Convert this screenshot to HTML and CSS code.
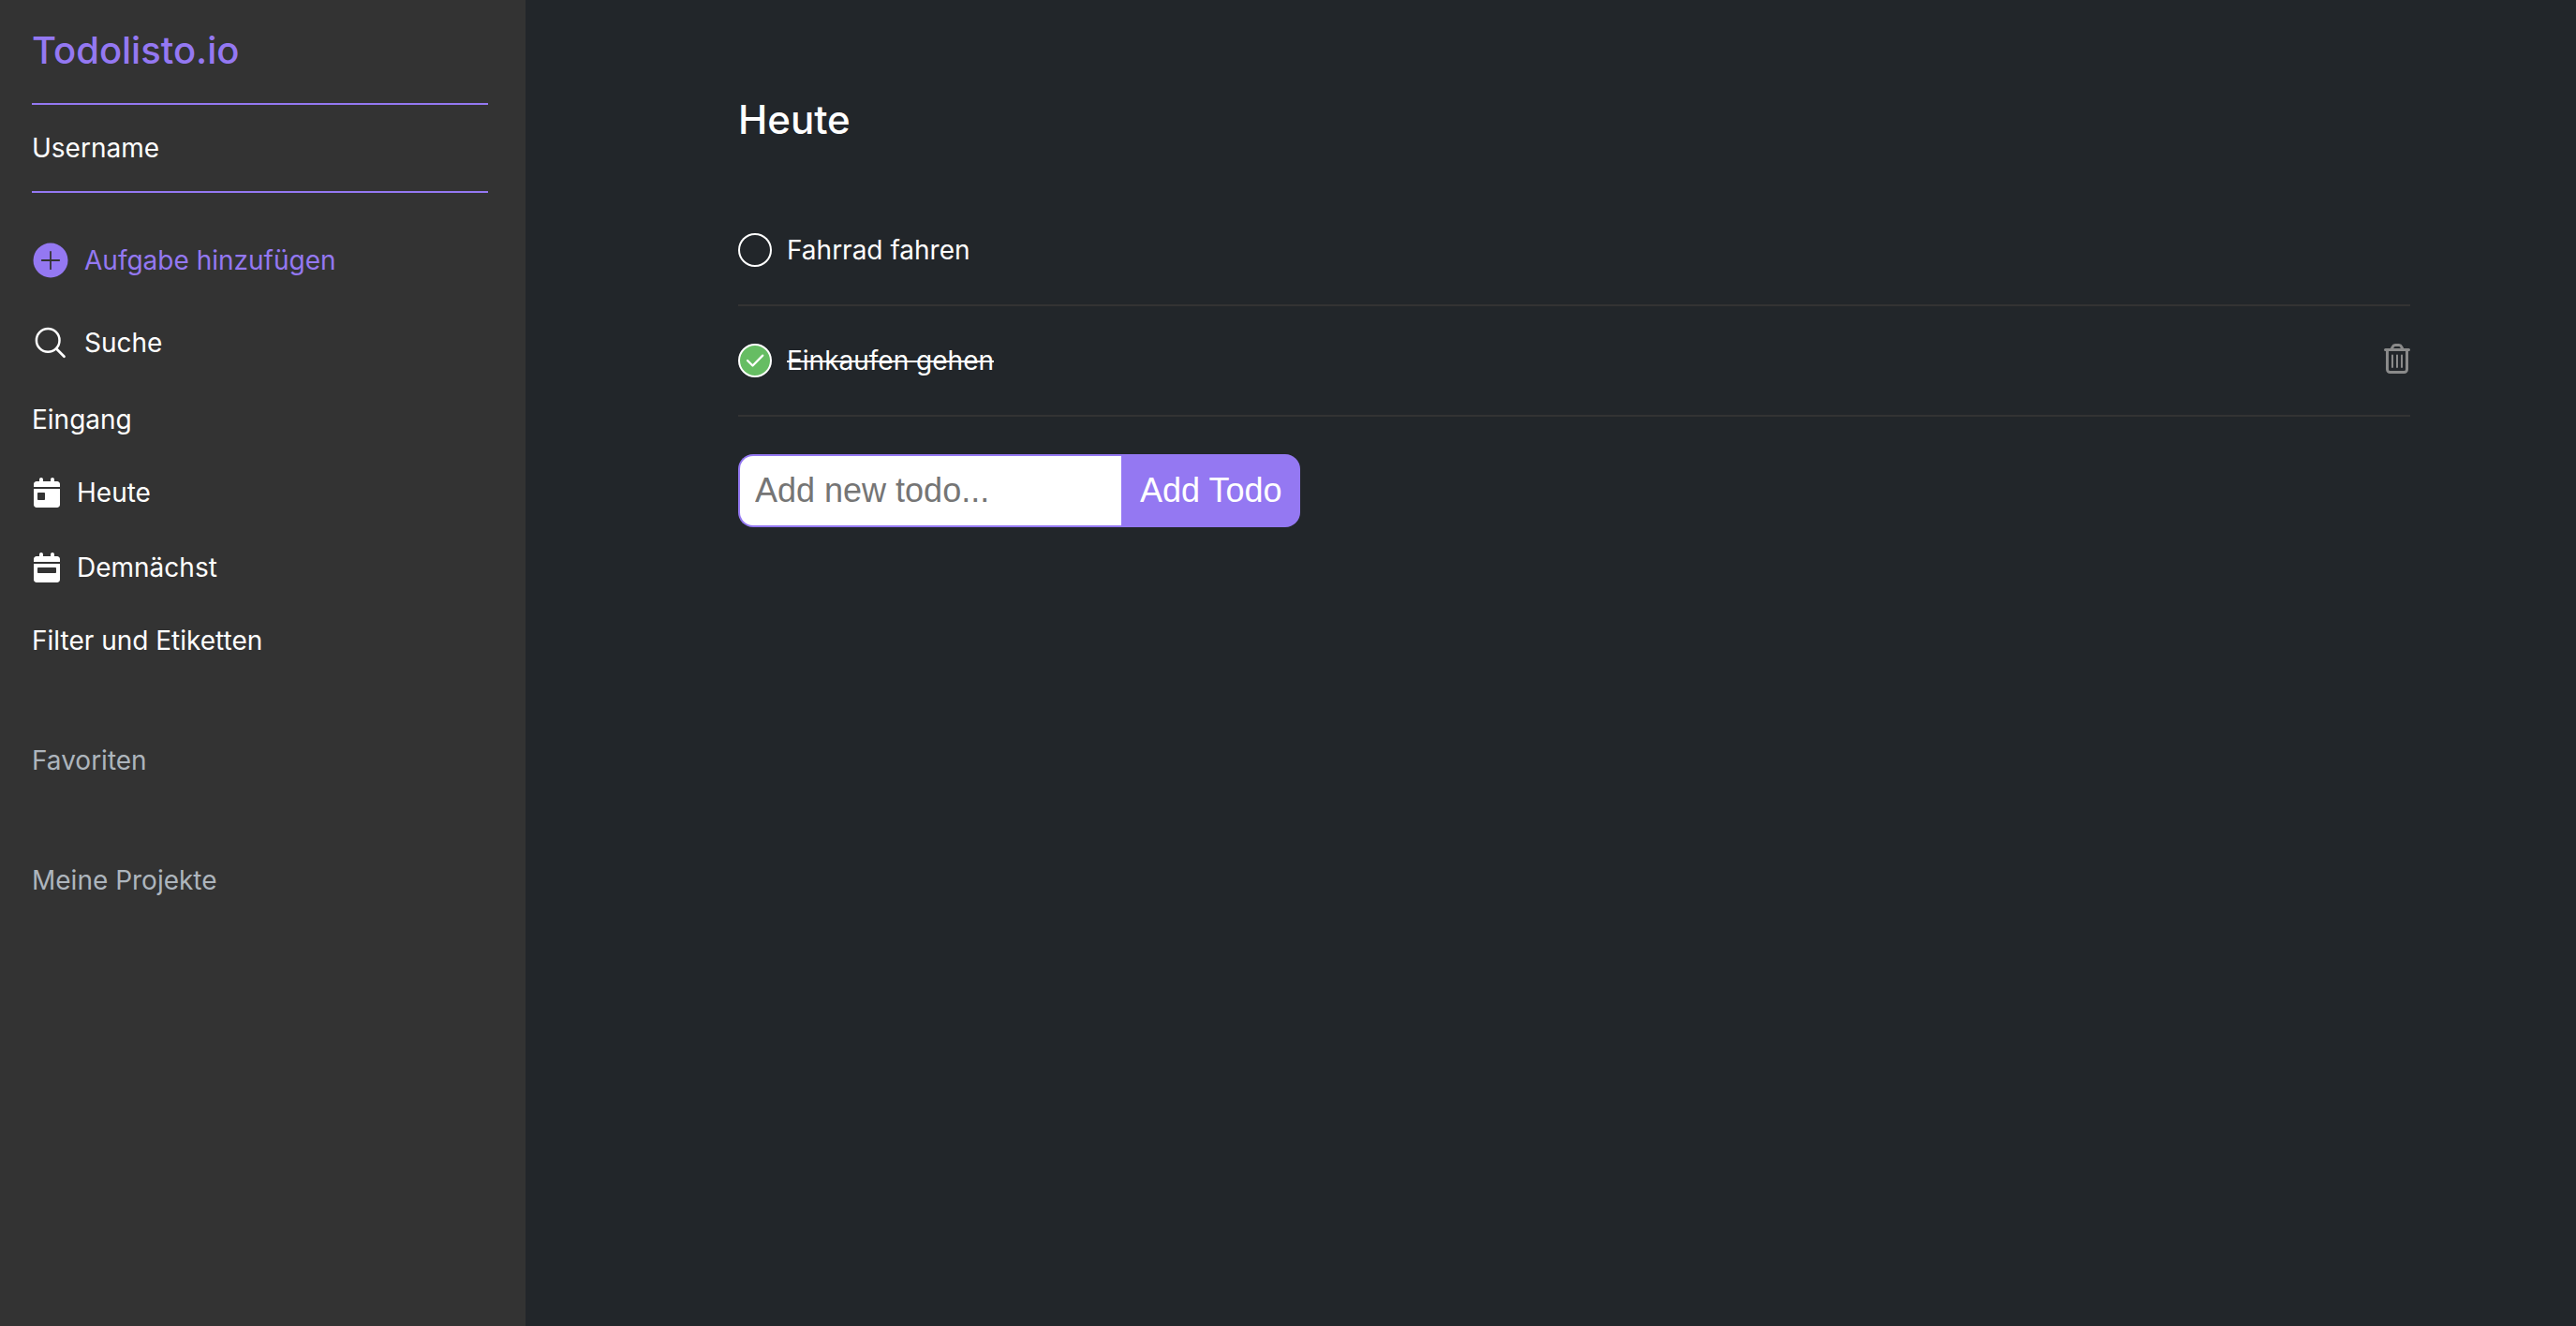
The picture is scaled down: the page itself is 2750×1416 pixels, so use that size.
FILE: index.html
```html
<!DOCTYPE html>
<html lang="de">
<head>
<meta charset="utf-8">
<title>Todolisto.io</title>
<link rel="stylesheet" href="styles.css">
</head>
<body>
<aside class="sidebar">
  <h1 class="brand">Todolisto.io</h1>
  <p class="user">Username</p>
  <nav class="nav">
    <button class="nav-action nav-action--add" type="button">
      <svg class="nav-action-icon" viewBox="0 0 40 40" aria-hidden="true">
        <circle cx="20" cy="20" r="18.5" fill="currentColor"/>
        <path d="M20 10.800v18.400M10.800 20h18.400" fill="none" stroke="#333" stroke-width="1.800" stroke-linecap="round"/>
      </svg>
      Aufgabe hinzufügen
    </button>
    <button class="nav-action" type="button">
      <svg class="nav-action-icon" viewBox="0 0 40 40" fill="none" stroke="currentColor" stroke-width="2.500" stroke-linecap="round" aria-hidden="true">
        <circle cx="17.200" cy="17.400" r="12.300"/>
        <path d="M26.300 26.500l8.200 8.200" stroke-width="2.700"/>
      </svg>
      Suche
    </button>
    <a class="nav-link" href="#eingang">Eingang</a>
    <a class="nav-link nav-link--icon" href="#heute">
      <svg class="calendar" viewBox="0 0 448 512" fill="currentColor" aria-hidden="true">
        <path d="M128 0c17.700 0 32 14.300 32 32V64H288V32c0-17.700 14.300-32 32-32s32 14.300 32 32V64h48c26.500 0 48 21.500 48 48v48H0V112C0 85.500 21.500 64 48 64H96V32c0-17.700 14.300-32 32-32zM0 192H448V464c0 26.500-21.500 48-48 48H48c-26.500 0-48-21.500-48-48V192zm80 64c-8.800 0-16 7.200-16 16v96c0 8.800 7.200 16 16 16h96c8.800 0 16-7.200 16-16V272c0-8.800-7.200-16-16-16H80z"/>
      </svg>
      Heute
    </a>
    <a class="nav-link nav-link--icon" href="#demnaechst">
      <svg class="calendar" viewBox="0 0 448 512" fill="currentColor" aria-hidden="true">
        <path d="M128 0c17.700 0 32 14.300 32 32V64H288V32c0-17.700 14.300-32 32-32s32 14.300 32 32V64h48c26.500 0 48 21.500 48 48v48H0V112C0 85.500 21.500 64 48 64H96V32c0-17.700 14.300-32 32-32zM0 192H448V464c0 26.500-21.500 48-48 48H48c-26.500 0-48-21.500-48-48V192zm80 64c-8.800 0-16 7.200-16 16v64c0 8.800 7.200 16 16 16h288c8.800 0 16-7.200 16-16V272c0-8.800-7.200-16-16-16H80z"/>
      </svg>
      Demnächst
    </a>
    <a class="nav-link" href="#filter">Filter und Etiketten</a>
  </nav>
  <h2 class="group">Favoriten</h2>
  <h2 class="group">Meine Projekte</h2>
</aside>
<main class="main">
  <h2 class="heading">Heute</h2>
  <ul class="todos">
    <li class="todo">
      <label class="todo-label">
        <span class="check">
          <input class="check-box" type="checkbox">
        </span>
        <span>Fahrrad fahren</span>
      </label>
    </li>
    <li class="todo todo--done">
      <label class="todo-label">
        <span class="check">
          <input class="check-box" type="checkbox" checked>
          <svg class="check-mark" viewBox="0 0 36 36" fill="none" stroke="#fff" stroke-width="2.300" stroke-linecap="round" stroke-linejoin="round" aria-hidden="true">
            <path d="M10 18l5.500 5.500L26.200 12.600"/>
          </svg>
        </span>
        <span class="todo-text">Einkaufen gehen</span>
      </label>
      <button class="delete" type="button" aria-label="Löschen">
        <svg class="delete-icon" viewBox="0 0 28 32" fill="none" stroke="currentColor" stroke-linecap="round" stroke-linejoin="round" aria-hidden="true">
          <path d="M1.500 6.500h25M3.500 7v20.500a3 3 0 0 0 3 3h15a3 3 0 0 0 3-3V7M8 6l1.300-2.700a3 3 0 0 1 2.700-1.800h4a3 3 0 0 1 2.700 1.800L20 6" stroke-width="3"/>
          <path d="M9 12.500v12.500M14 12.500v12.500M19 12.500v12.500" stroke-width="2"/>
        </svg>
      </button>
    </li>
  </ul>
  <form class="add">
    <input class="add-input" type="text" placeholder="Add new todo..." aria-label="Add new todo">
    <button class="add-button" type="submit">Add Todo</button>
  </form>
</main>
</body>
</html>
```
FILE: styles.css
```css
* {
  box-sizing: border-box;
  margin: 0;
  padding: 0;
}

body {
  display: flex;
  min-height: 100vh;
  background: #22262a;
  color: #fff;
  font: 400 28px/36px Inter, "Liberation Sans", sans-serif;
}

button {
  border: 0;
  background: none;
  color: inherit;
  font: inherit;
  cursor: pointer;
}

.sidebar {
  flex: 0 0 561px;
  padding: 30px 40px 40px 34px;
  background: #333;
}

.brand {
  color: #9478f2;
  font-size: 40px;
  font-weight: 500;
  line-height: 48px;
}

.user {
  margin: 32px 0 48px;
  padding: 28px 0;
  border: solid #9478f2;
  border-width: 2px 0;
}

.nav {
  display: flex;
  flex-direction: column;
  align-items: flex-start;
  gap: 40px;
}

.nav-action {
  display: flex;
  align-items: center;
  gap: 16px;
  height: 48px;
}

.nav-action--add {
  color: #9478f2;
}

.nav-action-icon {
  width: 40px;
  height: 40px;
}

.nav-link {
  color: inherit;
  text-decoration: none;
}

.nav-link--icon {
  display: flex;
  align-items: center;
  gap: 18px;
  height: 40px;
  padding-left: 2px;
}

.calendar {
  width: 28px;
  height: 32px;
}

.group {
  margin-top: 92px;
  color: #adb5bd;
  font-size: 28px;
  font-weight: 400;
}

.main {
  flex: 1;
  padding: 102px 177px 40px 227px;
}

.heading {
  margin-bottom: 55px;
  font-size: 42px;
  font-weight: 500;
  line-height: 52px;
}

.todos {
  margin-bottom: 40px;
  list-style: none;
}

.todo {
  display: flex;
  align-items: flex-start;
  justify-content: space-between;
  padding: 40px 0;
  border-bottom: 2px solid #333;
}

.todo-label {
  display: flex;
  align-items: center;
  gap: 16px;
}

.todo--done .todo-text {
  text-decoration: line-through;
}

.check {
  display: grid;
}

.check-box,
.check-mark {
  grid-area: 1 / 1;
  width: 36px;
  height: 36px;
}

.check-box {
  appearance: none;
  border: 2px solid #fff;
  border-radius: 50%;
}

.check-box:checked {
  background: #66bd63;
}

.check-mark {
  pointer-events: none;
}

.delete {
  display: flex;
  color: #8a8a8a;
}

.delete-icon {
  width: 28px;
  height: 32px;
}

.add {
  display: flex;
  height: 78px;
  font: 36px/42px "Liberation Sans", sans-serif;
}

.add-input {
  width: 409px;
  padding: 0 16px;
  border: 2px solid #9478f2;
  border-right: 0;
  border-radius: 16px 0 0 16px;
  background: #fff;
  color: #212529;
  font: inherit;
}

.add-input::placeholder {
  color: #757575;
}

.add-button {
  padding: 0 20px;
  border-radius: 0 16px 16px 0;
  background: #9478f2;
}
```
